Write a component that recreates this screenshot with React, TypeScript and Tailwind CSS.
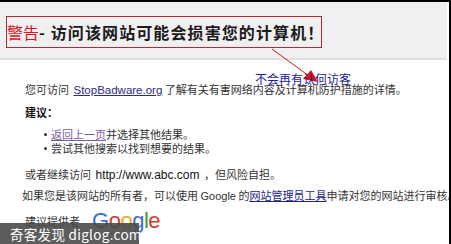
const cjk = "font-['Noto_Sans_CJK_SC','Liberation_Sans',sans-serif]";

function Arrow() {
  return (
    <svg
      className="absolute left-0 top-0 pointer-events-none"
      width={451}
      height={244}
      viewBox="0 0 451 244"
    >
      <line x1={272} y1={47} x2={309} y2={74} stroke="#d01818" strokeWidth={1} />
      <polygon points="318,80 303,77 311,68" fill="#e01010" />
    </svg>
  );
}

function Bullet({ children }: { children: React.ReactNode }) {
  return (
    <div className="flex items-center h-[14px] pl-[44px]">
      <span className="mr-[4px] w-[3px] h-[3px] bg-[#333] rounded-full" />
      <span>{children}</span>
    </div>
  );
}

export default function App() {
  return (
    <div
      className={`relative w-[451px] h-[244px] overflow-hidden bg-white border-t-2 border-r-2 border-black ${cjk}`}
    >
      {/* header band */}
      <div className="h-[58px] mr-[2px] bg-[#f0f0f0] border-b-2 border-[#dedede] pt-[14px]">
        <div className="ml-[6px] w-[316px] h-[32px] border border-[#b52a3a] flex items-center">
          <span className="text-[16px] tracking-[1.1px] font-bold text-[#1a1a1a] whitespace-nowrap">
            <span className="text-[#e3101c] font-normal tracking-[0px]">警告</span>- 访问该网站可能会损害您的计算机！
          </span>
        </div>
      </div>

      {/* body */}
      <div className="pt-[22px] text-[11px] leading-[14px] text-[#333] whitespace-nowrap">
        <div className="pl-[25px]">
          您可访问{" "}
          <span className="font-['Liberation_Sans',sans-serif] text-[11.5px] text-[#2b2b8c] underline ml-[2px]">
            StopBadware.org
          </span>{" "}
          了解有关有害网络内容及计算机防护措施的详情。
        </div>
        <div className="pl-[25px] mt-[8px] font-bold text-[#111]">建议：</div>
        <div className="mt-[8px]">
          <Bullet>
            <span className="text-[#7a5a9c] underline">返回上一页</span>并选择其他结果。
          </Bullet>
          <Bullet>尝试其他搜索以找到想要的结果。</Bullet>
        </div>
        <div className="pl-[25px] mt-[12px]">
          或者继续访问{" "}
          <span className="font-['Liberation_Sans',sans-serif] text-[12px] text-[#111] mx-[2px]">
            http://www.abc.com
          </span>{" "}
          ，但风险自担。
        </div>
        <div className="pl-[22px] mt-[6px]">
          如果您是该网站的所有者，可以使用{" "}
          <span className="font-['Liberation_Sans',sans-serif] text-[11px]">Google</span> 的
          <span className="text-[#22228c] underline">网站管理员工具</span>
          申请对您的网站进行审核。
        </div>
        <div className="pl-[25px] mt-[7px] flex items-center">
          <span>建议提供者</span>
          <span className="ml-[12px] font-['Liberation_Sans',sans-serif] text-[22px] leading-[22px] tracking-[-0.5px]">
            <span className="text-[#3a6fd8]">G</span>
            <span className="text-[#d43a2a]">o</span>
            <span className="text-[#e8b021]">o</span>
            <span className="text-[#3a6fd8]">g</span>
            <span className="text-[#3a9a3a]">l</span>
            <span className="text-[#d43a2a]">e</span>
          </span>
        </div>
      </div>

      {/* annotation */}
      <Arrow />
      <div className="absolute left-[255px] top-[70px] text-[12px] leading-[14px] text-[#1c1ca0] whitespace-nowrap">
        不会再有认何访客
      </div>

      {/* watermark */}
      <div className="absolute left-0 top-[221px] w-[139px] h-[23px] bg-[#4a4a4a]/90 flex items-center pl-[10px]">
        <span className="text-white text-[13.5px] tracking-[0.3px] whitespace-nowrap">
          奇客发现 diglog.com
        </span>
      </div>
    </div>
  );
}
